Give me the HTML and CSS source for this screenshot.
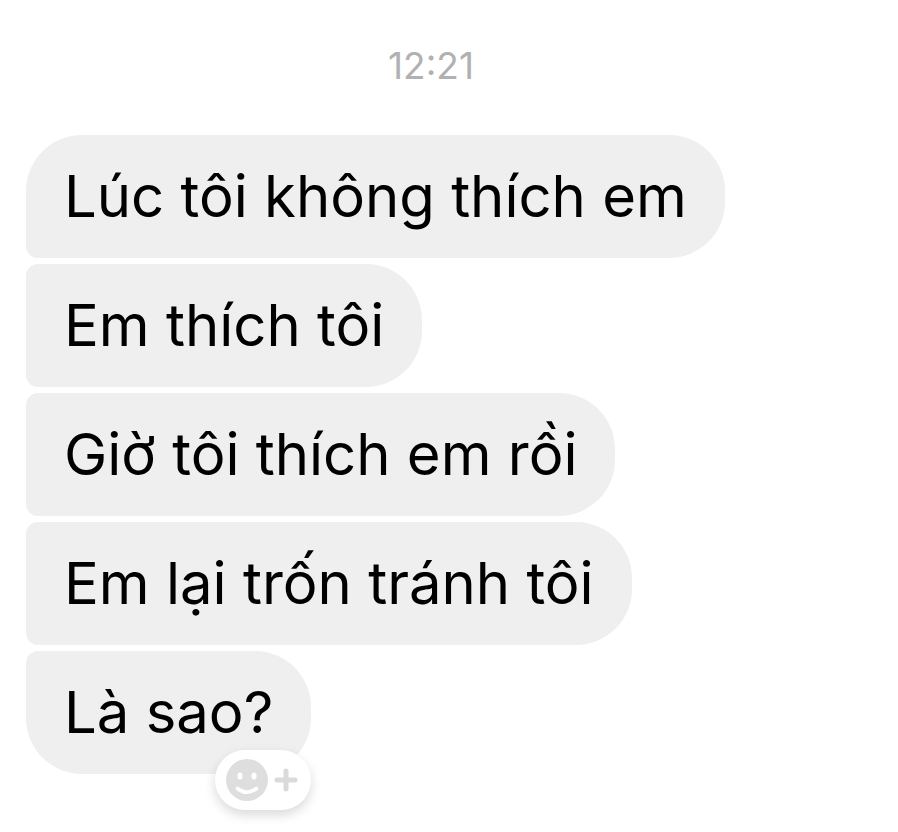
FILE: index.html
```html
<!DOCTYPE html>
<html lang="vi">
<head>
<meta charset="utf-8">
<meta name="viewport" content="width=device-width, initial-scale=1">
<title>Tin nhắn</title>
<link rel="stylesheet" href="styles.css">
</head>
<body>
<main class="chat">
  <time class="stamp" datetime="12:21">12:21</time>
  <ul class="messages">
    <li class="bubble">Lúc tôi không thích em</li>
    <li class="bubble">Em thích tôi</li>
    <li class="bubble">Giờ tôi thích em rồi</li>
    <li class="bubble">Em lại trốn tránh tôi</li>
    <li class="bubble">Là sao?
      <button class="react" type="button" aria-label="Bày tỏ cảm xúc">
        <svg class="react-icon" viewBox="0 0 74 42" aria-hidden="true">
          <circle cx="21" cy="21" r="21" fill="#dedede"/>
          <ellipse cx="14" cy="17" rx="2.600" ry="3.600" fill="#fff"/>
          <ellipse cx="28" cy="17" rx="2.600" ry="3.600" fill="#fff"/>
          <path d="M11.500 29.500Q21 37 30.500 29.500" fill="none" stroke="#fff" stroke-width="3.600" stroke-linecap="round"/>
          <path d="M51 21h18M60 12v18" stroke="#dadada" stroke-width="5" stroke-linecap="round"/>
        </svg>
      </button>
    </li>
  </ul>
</main>
</body>
</html>
```
FILE: styles.css
```css
body {
  margin: 0;
  background: #fff;
  color: #000;
  font-family: Inter, "Liberation Sans", sans-serif;
}

.chat {
  display: flex;
  flex-direction: column;
  padding: 44px 62px 58px 26px;
}

.stamp {
  align-self: center;
  margin-bottom: 47px;
  color: #b1b1b1;
  font-size: 37px;
  line-height: 44px;
}

.messages {
  display: flex;
  flex-direction: column;
  align-items: flex-start;
  gap: 6px;
  margin: 0;
  padding: 0;
  list-style: none;
}

.bubble {
  position: relative;
  box-sizing: border-box;
  padding: 25px 38px 26px;
  border-radius: 12px 56px 56px 12px;
  background: #efefef;
  font-size: 58px;
  line-height: 72px;
}

.bubble:first-child {
  border-top-left-radius: 56px;
}

.bubble:last-child {
  border-bottom-left-radius: 56px;
}

.react {
  position: absolute;
  right: 0;
  bottom: -36px;
  display: flex;
  align-items: center;
  justify-content: center;
  width: 96px;
  height: 60px;
  padding: 0;
  border: 0;
  border-radius: 30px;
  background: #fff;
  box-shadow: 0 5px 12px rgba(0, 0, 0, 0.15);
}

.react-icon {
  width: 74px;
  height: 42px;
}
```
